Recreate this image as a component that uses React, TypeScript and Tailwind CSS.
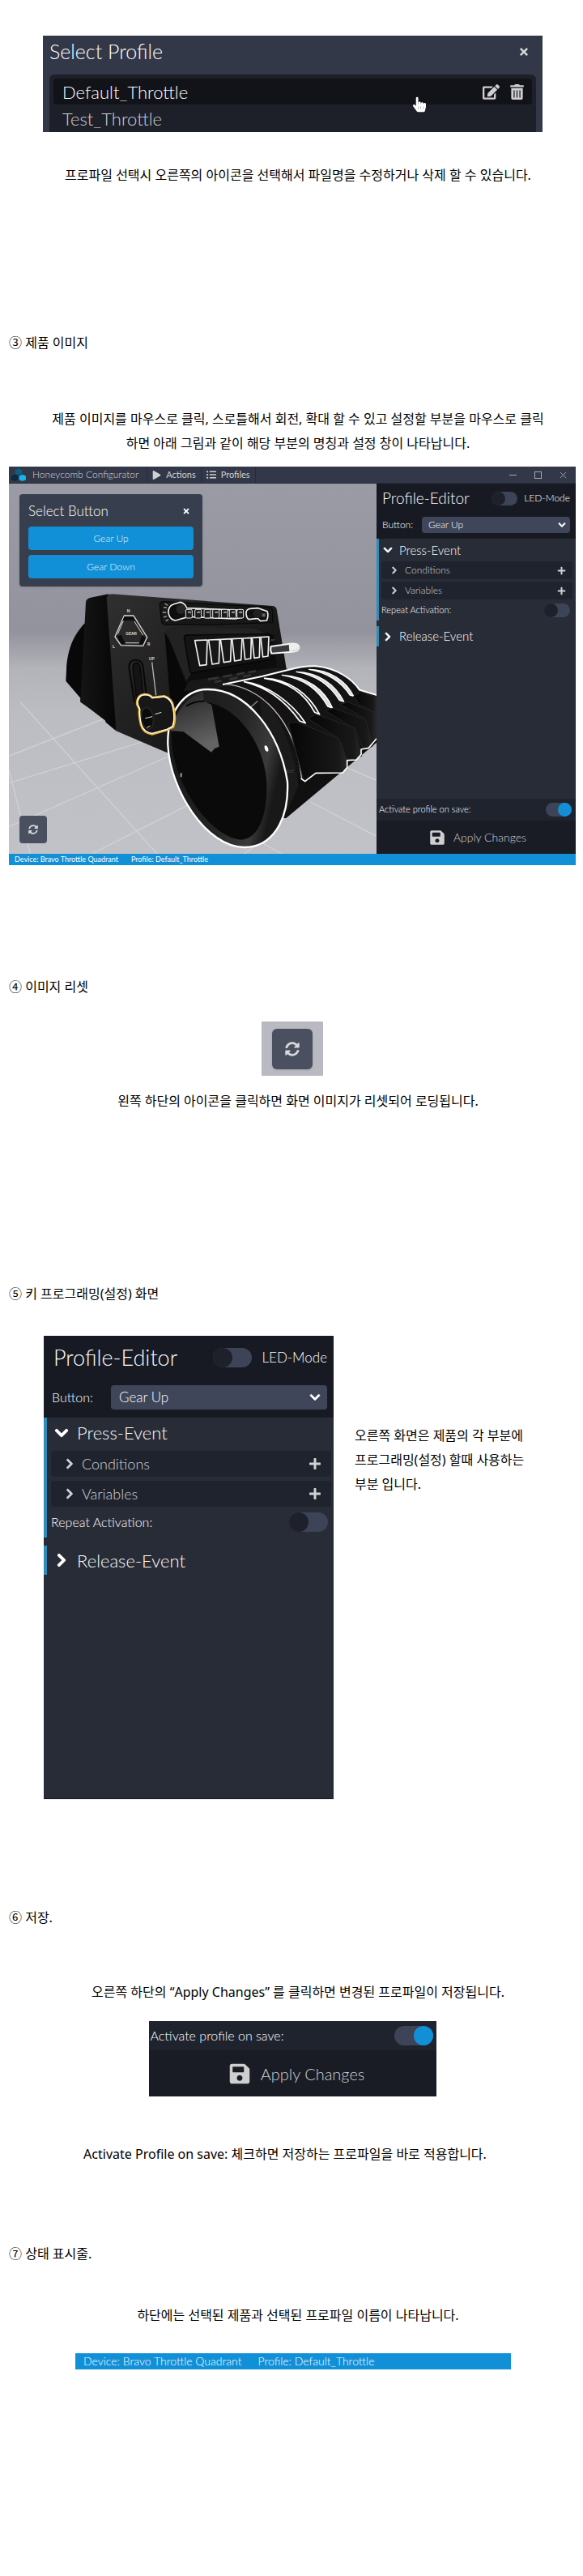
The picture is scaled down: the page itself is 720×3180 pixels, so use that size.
import type { ReactNode } from 'react';
import {
  FaChevronDown,
  FaChevronRight,
  FaEdit,
  FaHandPointer,
  FaListUl,
  FaPlay,
  FaPlus,
  FaSave,
  FaSyncAlt,
  FaTimes,
  FaTrashAlt,
} from 'react-icons/fa';
import { clsx } from 'clsx';

function Heading({ children, className }: { children: ReactNode; className?: string }) {
  return <h2 className={clsx('text-base leading-[30px]', className)}>{children}</h2>;
}

function Text({ children, className }: { children: ReactNode; className?: string }) {
  return <p className={clsx('pl-[14px] text-center text-base leading-[30px]', className)}>{children}</p>;
}

function Toggle({ id, large, on, label }: { id: string; large?: boolean; on?: boolean; label?: string }) {
  return (
    <input
      id={id}
      type="checkbox"
      role="switch"
      aria-label={label}
      defaultChecked={on}
      className={clsx(
        'flex shrink-0 appearance-none rounded-full bg-[#3d4457] checked:justify-end',
        'before:block before:rounded-full before:bg-[#1e212b] checked:before:bg-[#1190d8]',
        large ? 'h-6 w-12 before:size-6' : 'h-[17px] w-8 before:size-[17px]',
      )}
    />
  );
}

function SubRow({ title, large }: { title: string; large?: boolean }) {
  return (
    <div
      className={clsx(
        'flex items-center rounded-sm bg-[#1f232d] text-[#d0d1d4]',
        large ? 'h-8 pr-3 pl-4 text-[18px]' : 'h-[22px] pr-2 pl-[11px] text-xs',
      )}
    >
      <button type="button" className="flex flex-1 items-center gap-2">
        <FaChevronRight className={clsx('stroke-[30px]', large ? 'size-[14px]' : 'size-[10px]')} />
        {title}
      </button>
      <button type="button" aria-label={`Add ${title}`}>
        <FaPlus className={large ? 'size-4' : 'size-[11px]'} />
      </button>
    </div>
  );
}

function ProfileEditor({ id, large }: { id: string; large?: boolean }) {
  const eventTitle = clsx('flex w-full items-center', large ? 'gap-2.5 pl-1 text-[22px]' : 'gap-2 pl-0.5 text-[15px]');
  const chevron = clsx('stroke-[30px]', large ? 'size-[18px]' : 'size-3');
  return (
    <div className="bg-[#282c37] text-white">
      <div className={clsx('bg-[#171a23]', large ? 'h-[101px] px-2' : 'h-[68px] px-[7px]')}>
        <div className={clsx('flex items-center', large ? 'h-[54px] pl-1' : 'h-9')}>
          <h3 className={clsx('flex-1', large ? 'text-[27px]' : 'text-[19px]')}>Profile-Editor</h3>
          <label
            htmlFor={`${id}-led`}
            className={clsx('order-last', large ? 'pl-3 text-[17px]' : 'pl-2 text-xs')}
          >
            LED-Mode
          </label>
          <Toggle id={`${id}-led`} large={large} />
        </div>
        <div className={clsx('flex items-center', large ? 'h-11 text-base' : 'h-[30px] text-xs')}>
          <label htmlFor={`${id}-button`} className={large ? 'w-[75px] pl-0.5' : 'w-[49px]'}>
            Button:
          </label>
          <div className="relative flex-1">
            <select
              id={`${id}-button`}
              className={clsx(
                'block w-full appearance-none rounded-sm bg-[#3f465a]',
                large ? 'h-[30px] px-2.5 text-[17px]' : 'h-5 px-2 text-xs',
              )}
            >
              <option>Gear Up</option>
              <option>Gear Down</option>
            </select>
            <FaChevronDown
              className={clsx(
                'pointer-events-none absolute stroke-[30px]',
                large ? 'top-2 right-2 size-[14px]' : 'top-[5px] right-[5px] size-[10px]',
              )}
            />
          </div>
        </div>
      </div>
      <div
        className={clsx(
          'border-[#318bb9]',
          large ? 'h-[148px] border-l-4 pr-[3px] pl-[5px]' : 'h-[101px] border-l-3 pr-1 pl-[3px]',
        )}
      >
        <button type="button" className={clsx(eventTitle, large ? 'h-[41px] pb-1' : 'h-7')}>
          <FaChevronDown className={chevron} />
          Press-Event
        </button>
        <div className={clsx('flex flex-col', large ? 'gap-[5px]' : 'gap-[3px]')}>
          <SubRow title="Conditions" large={large} />
          <SubRow title="Variables" large={large} />
        </div>
        <div className={clsx('flex items-center justify-between', large ? 'h-[38px] pr-1' : 'h-[26px] pr-[3px]')}>
          <label htmlFor={`${id}-repeat`} className={large ? 'text-base' : 'text-[11px]'}>
            Repeat Activation:
          </label>
          <Toggle id={`${id}-repeat`} large={large} />
        </div>
      </div>
      <div
        className={clsx(
          'flex border-[#318bb9]',
          large ? 'mt-2.5 h-9 border-l-4 pl-[5px]' : 'mt-[7px] h-[25px] border-l-3 pl-[3px]',
        )}
      >
        <button type="button" className={eventTitle}>
          <FaChevronRight className={chevron} />
          Release-Event
        </button>
      </div>
    </div>
  );
}

function SavePanel({ id, large }: { id: string; large?: boolean }) {
  return (
    <div className="bg-[#191c25] text-white">
      <div
        className={clsx(
          'flex items-center justify-between bg-[#1f232e]',
          large ? 'h-9 pr-1 pl-0.5 text-base' : 'h-[27px] pr-[5px] pl-[3px] text-[11px]',
        )}
      >
        <label htmlFor={id}>Activate profile on save:</label>
        <Toggle id={id} large={large} on />
      </div>
      <button
        type="button"
        className={clsx(
          'flex w-full items-center justify-center text-[#cfcfd1]',
          large ? 'h-[57px] gap-3 pl-2.5 text-xl' : 'h-[41px] gap-2.5 pl-1 text-sm',
        )}
      >
        <FaSave className={large ? 'size-7' : 'size-5'} />
        Apply Changes
      </button>
    </div>
  );
}

function StatusBar({ large }: { large?: boolean }) {
  return (
    <div
      className={clsx(
        'flex items-center bg-[#1190d8] text-white',
        large ? 'h-5 gap-5 px-2.5 text-sm' : 'h-[14px] gap-4 px-[7px] text-[9px] font-normal',
      )}
    >
      <span>Device: Bravo Throttle Quadrant</span>
      <span>Profile: Default_Throttle</span>
    </div>
  );
}

// Isometric-looking view of the throttle quadrant on the grid floor
function Quadrant() {
  const switches = [
    'M152 242L198 240L195 332L170 335Z',
    'M203 240L244 238L241 326L216 330Z',
    'M247 238L287 236L284 319L259 323Z',
    'M290 236L327 234L323 314L299 318Z',
    'M330 234L361 232L359 309L338 312Z',
    'M364 232L393 230L391 304L372 307Z',
    'M396 230L426 228L423 300L404 303Z',
  ];
  return (
    <svg
      viewBox="33 1791 1362 1371"
      preserveAspectRatio="xMidYMid slice"
      className="absolute inset-0 h-full w-full"
      aria-hidden="true"
    >
      <defs>
        <linearGradient id="sky" x1="0" y1="0" x2="0" y2="1">
          <stop offset="0" stopColor="#9a9ba4" />
          <stop offset="0.4" stopColor="#92939c" />
          <stop offset="0.5" stopColor="#b3b4ba" />
          <stop offset="0.62" stopColor="#bcbdc3" />
          <stop offset="1" stopColor="#c1c2c8" />
        </linearGradient>
        <linearGradient id="face" x1="0" y1="0" x2="1" y2="0.7">
          <stop offset="0" stopColor="#303030" />
          <stop offset="0.5" stopColor="#1f1f1f" />
          <stop offset="1" stopColor="#0e0e0e" />
        </linearGradient>
        <linearGradient id="side" x1="0" y1="0" x2="1" y2="0">
          <stop offset="0" stopColor="#151515" />
          <stop offset="1" stopColor="#050505" />
        </linearGradient>
        <linearGradient id="rim" x1="0" y1="0" x2="1" y2="0.3">
          <stop offset="0" stopColor="#161616" />
          <stop offset="0.6" stopColor="#242424" />
          <stop offset="0.88" stopColor="#3a3a3a" />
          <stop offset="1" stopColor="#181818" />
        </linearGradient>
        <linearGradient id="shine" x1="0" y1="0" x2="0.3" y2="1">
          <stop offset="0" stopColor="#5a5a5a" />
          <stop offset="0.2" stopColor="#2c2c2c" />
          <stop offset="1" stopColor="#636363" />
        </linearGradient>
        <linearGradient id="blade" x1="0" y1="0" x2="1" y2="0">
          <stop offset="0" stopColor="#060606" />
          <stop offset="0.85" stopColor="#181818" />
          <stop offset="1" stopColor="#2a2a2a" />
        </linearGradient>
      </defs>
      <rect x="33" y="1791" width="1362" height="1371" fill="url(#sky)" />

      <g transform="translate(0 2460)">
        <g stroke="#d4d5d9" strokeWidth="4" fill="none" opacity="0.8">
          <path d="M33 390L112 702M75 140L582 702M33 440L520 290M33 602L650 330M340 702L700 520M33 340L390 200M300 140L640 340M960 655L1045 702M905 702L970 655M1150 510L1395 637M1290 385L1395 430" />
        </g>
        {/* cylinder base */}
        <path d="M840 80L1040 10L1395 120V290L1060 570L900 560Z" fill="#101010" />
      </g>

      <g transform="translate(180 2160)">
        <path d="M132 150C95 190 70 240 66 320L64 362L118 425V440L207 500L212 515L250 547L250 130Z" fill="#080808" />
        <path d="M138 70Q140 56 156 53L222 40L262 548L205 505L118 438Z" fill="url(#side)" />
        <path d="M215 55Q218 40 236 40L830 84Q842 86 845 96L880 310L900 480L620 600L450 632L250 547Z" fill="url(#face)" />
        <path d="M430 180L610 500L450 632L450 430Z" fill="#080808" />
        <g fill="none" stroke="#d8d8d8" strokeWidth="4" strokeLinejoin="round">
          <path d="M280 120H315L365 200L350 232L268 230L246 198Z" />
          <path d="M277 140L256 188M318 142L350 192M285 221H335" strokeWidth="3" />
        </g>
        <path d="M280 123H312L320 138H275ZM252 196L270 192L284 224H268ZM345 194L360 200L350 226H335Z" fill="#0c0c0c" />
        <g fill="#cfcfcf" fontFamily="Roboto, sans-serif" fontWeight="700" fontSize="16">
          <text x="286" y="191">GEAR</text>
          <text x="290" y="109">N</text>
          <text x="237" y="239">L</text>
          <text x="366" y="230">R</text>
          <text x="372" y="285">UP</text>
        </g>
        <path d="M318 440L298 312Q298 284 322 284Q348 284 350 312L362 410" fill="none" stroke="#080808" strokeWidth="6" />
        <path d="M326 430L312 316Q312 294 324 294Q338 294 340 316L350 412" fill="#141414" stroke="#080808" strokeWidth="4" />
        <path d="M383 292L398 415" stroke="#b5b5b5" strokeWidth="4" />
      </g>

      <g transform="translate(570 2130)">
        {/* knob row */}
        <path d="M22 108Q24 97 40 98L425 118Q440 120 440 135V175L220 184H45Q30 184 28 168Z" fill="#171717" stroke="#090909" strokeWidth="4" />
        <path d="M40 105L52 112M36 120H48M32 138H46M36 156L48 152M44 170L54 164" stroke="#999" strokeWidth="4" />
        <path
          d="M54 140Q52 116 72 108L98 100Q116 104 122 122L330 130V156L300 162L128 154L80 168Q58 164 54 140Z"
          fill="#0e0e0e"
          stroke="#eee"
          strokeWidth="5"
        />
        <circle cx="101" cy="126" r="18" fill="#262626" />
        {[118, 152, 186, 218, 250, 280, 308].map((x) => (
          <g key={x}>
            <rect x={x} y="127" width="24" height="32" rx="5" fill="#1c1c1c" stroke="#e8e8e8" strokeWidth="3" />
            <rect x={x + 8} y="134" width="12" height="7" fill="#8b8b8b" />
          </g>
        ))}
        <path d="M342 145Q340 125 358 124L385 122L420 134Q426 150 418 168L395 170L385 160L352 164Q343 158 342 145Z" fill="#101010" stroke="#eee" strokeWidth="5" />
        <circle cx="385" cy="142" r="17" fill="#202020" />
        <rect x="401" y="142" width="12" height="12" fill="#666" />

        {/* rocker housing */}
        <path d="M45 208L75 194L370 196L445 222L455 340L300 400L120 410Z" fill="#0d0d0d" />
        <path d="M45 208L75 194L370 196L430 220L112 224L140 362L120 392Z" fill="#222" />
        <path d="M112 232Q113 222 124 222L422 218Q428 218 430 228L438 312L142 362Q134 362 132 352Z" fill="#141414" stroke="#050505" strokeWidth="4" />
        {switches.map((d) => (
          <path key={d} d={d} fill="#171717" stroke="#f0f0f0" strokeWidth="5" strokeLinejoin="round" />
        ))}
        <text x="432" y="247" fill="#aaa" fontFamily="Roboto, sans-serif" fontSize="12">
          AP
        </text>
        <path d="M434 264L505 254Q536 250 538 268Q536 284 510 284L436 290Q430 276 434 264Z" fill="#3a3a3a" stroke="#f4f4f4" strokeWidth="6" />
        <path d="M500 256L525 254Q536 260 535 270Q530 282 502 282Z" fill="#eee" />
        <path d="M130 392L450 342L510 350L260 402L180 425L110 430Z" fill="#181818" />
        <path d="M200 386L240 380M256 376L290 370M306 368L336 362M350 360L378 355M225 396L250 391M280 386L310 380M330 376L360 370" stroke="#333" strokeWidth="8" />

        {/* throttle cylinder */}
        <path
          d="M255 405L400 375L500 350Q560 335 600 337C680 345 735 385 762 425L825 444V600L548 755L400 700L240 430Z"
          fill="#131313"
        />
        <path d="M255 405L400 375L500 350Q560 335 600 337C680 345 735 385 762 425L825 444" fill="none" stroke="#fff" strokeWidth="6" />
        <path d="M390 440C460 500 520 640 535 780L492 880L420 700Z" fill="#1b1b1b" />
        <path d="M262 404C390 410 525 530 548 755" fill="none" stroke="#c6b8b4" strokeWidth="4" />
        <g fill="#202020" stroke="#fff" strokeWidth="5" strokeLinejoin="round">
          <path d="M335 395C420 405 510 470 562 548L540 540C490 470 420 415 335 395Z" />
          <path d="M410 382C500 385 575 440 614 516L596 508C560 440 500 395 410 382Z" />
        </g>
        <g fill="#ddd" stroke="#fff" strokeWidth="4" strokeLinejoin="round">
          <path d="M475 370C570 375 632 425 662 492L644 486C610 425 560 385 475 370Z" />
          <path d="M528 358C610 360 672 405 704 468L688 464C655 410 600 370 528 358Z" />
          <path d="M575 349C650 350 712 390 740 448L726 444C695 395 640 360 575 349Z" />
        </g>
        <g fill="url(#blade)" stroke="#242424" strokeWidth="3">
          <path d="M740 448L765 432L825 450V510L760 480Z" />
          <path d="M690 478L720 470L825 512V615L800 600L780 530Z" />
          <path d="M635 502L665 492L785 535L812 632L775 645L745 570Z" />
          <path d="M570 530L600 515L742 565L770 670L718 686L685 605Z" />
          <path d="M498 548L525 543L685 605L716 692L700 728L600 733L555 758Z" />
        </g>
        <path d="M545 753L560 764L600 733L700 732L716 712V686L750 684L768 664V645L796 640L825 605" fill="none" stroke="#fff" strokeWidth="5" strokeLinejoin="round" />
        <path d="M360 488L385 466" stroke="#777" strokeWidth="5" />
        <text x="490" y="733" fill="#666" fontFamily="Roboto, sans-serif" fontSize="14">
          IDLE
        </text>
      </g>

      {/* trim wheel */}
      <g transform="translate(0 2460)">
        <path
          d="M622 300C618 180 680 93 770 93C915 93 1035 250 1065 435C1072 590 1000 678 905 678C765 678 630 465 622 300Z"
          fill="url(#rim)"
          stroke="#fff"
          strokeWidth="7"
        />
        <path
          d="M636 265C640 190 690 140 745 140C870 140 980 290 988 440C990 570 955 648 890 650C770 635 634 430 636 265Z"
          fill="#0a0a0a"
        />
        <path d="M632 246Q660 140 752 97L755 137L784 150L812 305L795 312L783 326L680 250Z" fill="url(#shine)" />
        <path d="M690 155Q720 136 756 137" fill="none" stroke="#090909" strokeWidth="7" />
        <ellipse cx="987" cy="312" rx="6" ry="12" fill="#fff" transform="rotate(-20 987 312)" />
        <ellipse cx="671" cy="410" rx="3" ry="9" fill="#aaa" />
      </g>

      {/* gear lever */}
      <g transform="translate(180 2160)">
        <path
          d="M328 448Q326 414 356 411Q375 411 384 423L428 418Q456 426 462 456Q474 500 462 532L440 543L384 559Q350 554 342 524Q334 490 336 466Z"
          fill="#171717"
          stroke="#e9b02f"
          strokeWidth="8"
        />
        <path
          d="M330 448Q328 416 356 413Q375 413 384 425L428 420Q454 428 460 458Q470 500 459 530L438 541L384 556Q352 552 344 524Q336 490 338 466Z"
          fill="none"
          stroke="#fff"
          strokeWidth="4"
        />
        <ellipse cx="366" cy="500" rx="22" ry="40" fill="#0b0b0b" stroke="#262626" strokeWidth="5" transform="rotate(-8 366 500)" />
        <path d="M358 500L384 494M394 485L418 478M364 535L376 528" stroke="#ddd" strokeWidth="3" />
      </g>
    </svg>
  );
}

function Logo() {
  return (
    <svg viewBox="0 0 34 48" preserveAspectRatio="none" className="h-[17px] w-[18px]" aria-hidden="true">
      <path d="M17 1L25 6V18L17 23L9 18V6Z" fill="#0c5f86" />
      <path d="M8 22L16 27V40L8 45L0 40V27Z" fill="#0a2b40" />
      <path d="M26 22L34 27V40L26 45L18 40V27Z" fill="#14b4ec" />
    </svg>
  );
}

function Configurator() {
  return (
    <div className="mt-[14px] font-[Lato,sans-serif]">
      <div className="flex h-[21px] items-center border-b border-[#282d3a] bg-[#323848] text-[11px] text-[#d0d1d5]">
        <div className="flex h-full items-center gap-2 border-r border-[#272c39] pr-2.5 pl-[3px] text-xs font-light">
          <Logo />
          Honeycomb Configurator
        </div>
        <button type="button" className="flex h-full items-center gap-1.5 border-r border-[#272c39] px-1.5">
          <FaPlay className="size-[11px]" />
          Actions
        </button>
        <button type="button" className="flex h-full items-center gap-1.5 border-r border-[#272c39] px-1.5">
          <FaListUl className="size-3" />
          Profiles
        </button>
        <div className="ml-auto flex items-center gap-[22px] pr-[11px] text-[#a5a8b1]">
          <button type="button" aria-label="Minimize" className="h-px w-[9px] bg-[#a5a8b1]" />
          <button type="button" aria-label="Maximize" className="size-[9px] border border-[#a5a8b1]" />
          <button type="button" aria-label="Close">
            <svg viewBox="0 0 10 10" className="size-[9px]" stroke="currentColor" fill="none">
              <path d="M1 1L9 9M9 1L1 9" />
            </svg>
          </button>
        </div>
      </div>
      <div className="flex h-[457px] font-light">
        <div className="relative flex flex-1 flex-col items-start justify-between overflow-hidden px-[13px] py-[13px]">
          <Quadrant />
          <div className="relative w-[226px] rounded-sm bg-[#373e4e] px-[11px] pt-2 pb-2.5 text-white shadow">
            <div className="flex h-[26px] items-center justify-between pr-1">
              <h3 className="text-[17px]">Select Button</h3>
              <button type="button" aria-label="Close">
                <FaTimes className="size-[10px]" />
              </button>
            </div>
            <div className="mt-1.5 flex flex-col gap-1.5 text-xs text-[#e3f1fa]">
              <button type="button" className="h-[29px] rounded-sm bg-[#1190d8]">
                Gear Up
              </button>
              <button type="button" className="h-[29px] rounded-sm bg-[#1190d8]">
                Gear Down
              </button>
            </div>
          </div>
          <button
            type="button"
            aria-label="Reset view"
            className="relative flex size-[34px] items-center justify-center rounded-sm bg-[#4a5060] text-[#d9d9db]"
          >
            <FaSyncAlt className="size-3" />
          </button>
        </div>
        <div className="flex w-[246px] flex-col justify-between bg-[#282c37]">
          <ProfileEditor id="editor" />
          <SavePanel id="activate" />
        </div>
      </div>
      <StatusBar />
    </div>
  );
}

function SelectProfile() {
  return (
    <div className="relative mr-[41px] ml-[42px] bg-[#323848] px-2 font-[Lato,sans-serif] font-light text-white">
      <div className="flex h-12 items-center justify-between pr-2 pb-2">
        <h3 className="text-[25px]">Select Profile</h3>
        <button type="button" aria-label="Close" className="text-[#d6d6d8]">
          <FaTimes className="size-[14px]" />
        </button>
      </div>
      <ul className="h-[71px] rounded-t-md bg-[#1d2029] px-[5px] pt-[5px] text-[22px]">
        <li className="flex h-8 items-center rounded-sm bg-[#121318] px-[9px]">
          <span className="flex-1 pl-0.5">Default_Throttle</span>
          <span className="flex gap-3 text-[#cfcfd1]">
            <button type="button" aria-label="Rename">
              <FaEdit className="size-[21px]" />
            </button>
            <button type="button" aria-label="Delete">
              <FaTrashAlt className="size-[19px]" />
            </button>
          </span>
        </li>
        <li className="flex h-[34px] items-center px-[11px] text-[#d0d1d4]">Test_Throttle</li>
      </ul>
      {/* pointer over the highlighted row */}
      <FaHandPointer className="absolute top-[74px] right-[144px] h-[22px] w-4" />
    </div>
  );
}

export default function App() {
  return (
    <main className="min-h-screen bg-white px-[11px] pt-11 pb-[255px] font-['Noto_Sans','Noto_Sans_CJK_KR',sans-serif] text-black">
      <div className="-mr-0.5">
        <SelectProfile />
        <Text className="mt-[38px]">
          프로파일 선택시 오른쪽의 아이콘을 선택해서 파일명을 수정하거나 삭제 할 수 있습니다.
        </Text>

        <Heading className="mt-[177px]">③ 제품 이미지</Heading>
        <Text className="mt-16">
          제품 이미지를 마우스로 클릭, 스로틀해서 회전, 확대 할 수 있고 설정할 부분을 마우스로 클릭
          <br />
          하면 아래 그림과 같이 해당 부분의 명칭과 설정 창이 나타납니다.
        </Text>
        <Configurator />

        <Heading className="mt-[135px]">④ 이미지 리셋</Heading>
        <div className="mx-auto mt-7 flex h-[67px] w-[76px] items-center justify-center bg-[#b9bac1]">
          <button
            type="button"
            aria-label="Reset view"
            className="flex size-[50px] items-center justify-center rounded-md bg-[#4a5060] text-[#d9d9db] shadow"
          >
            <FaSyncAlt className="size-[18px]" />
          </button>
        </div>
        <Text className="mt-4">왼쪽 하단의 아이콘을 클릭하면 화면 이미지가 리셋되어 로딩됩니다.</Text>

        <Heading className="mt-[208px]">⑤ 키 프로그래밍(설정) 화면</Heading>
        <div className="mt-[37px] ml-[43px] flex gap-[26px]">
          <div className="h-[572px] w-[358px] shrink-0 border-b border-[#15171f] bg-[#282c37] font-[Lato,sans-serif] font-light">
            <ProfileEditor id="detail" large />
          </div>
          <p className="pt-[108px] text-base leading-[30px]">
            오른쪽 화면은 제품의 각 부분에
            <br />
            프로그래밍(설정) 할때 사용하는
            <br />
            부분 입니다.
          </p>
        </div>

        <Heading className="mt-[131px]">⑥ 저장.</Heading>
        <Text className="mt-[62px]">오른쪽 하단의 “Apply Changes” 를 클릭하면 변경된 프로파일이 저장됩니다.</Text>
        <div className="mx-auto mt-[21px] w-[355px] font-[Lato,sans-serif] font-light">
          <SavePanel id="activate-detail" large />
        </div>
        <Text className="mt-14 pr-8">Activate Profile on save: 체크하면 저장하는 프로파일을 바로 적용합니다.</Text>

        <Heading className="mt-[93px]">⑦ 상태 표시줄.</Heading>
        <Text className="mt-[46px]">하단에는 선택된 제품과 선택된 프로파일 이름이 나타납니다.</Text>
        <div className="mt-8 mr-20 ml-[82px] font-[Lato,sans-serif] font-light">
          <StatusBar large />
        </div>
      </div>
    </main>
  );
}
